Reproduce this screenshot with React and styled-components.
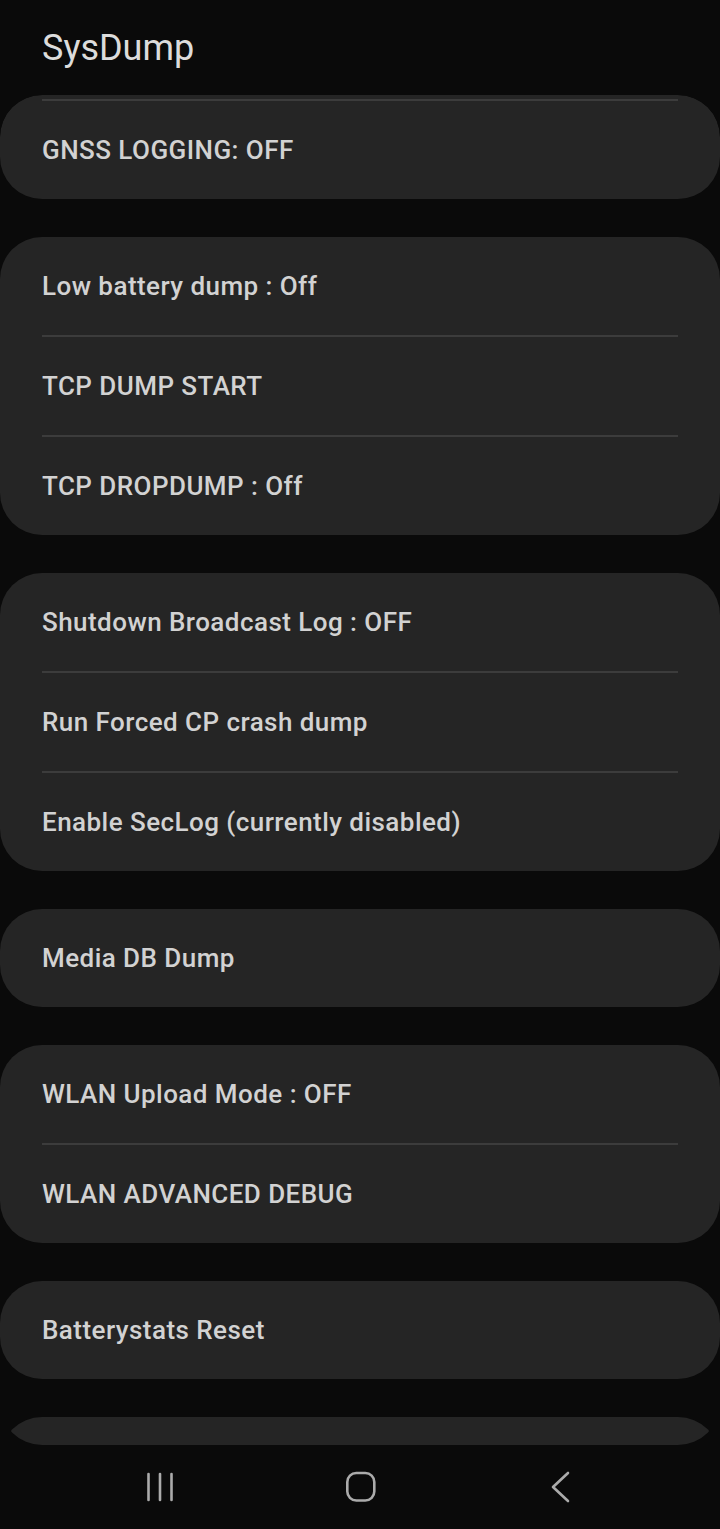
import React from "react";
import styled, { createGlobalStyle } from "styled-components";

const Global = createGlobalStyle`
  html, body { margin: 0; padding: 0; background: #0a0a0a; }
  body { font-family: Roboto, "Noto Sans", "Liberation Sans", sans-serif; }
  * { box-sizing: border-box; }
`;

const Screen = styled.div`
  width: 720px;
  height: 1529px;
  background: #0a0a0a;
  display: flex;
  flex-direction: column;
  overflow: hidden;
`;

const Header = styled.header`
  height: 95px;
  flex: none;
  padding: 0 0 0 42px;
  display: flex;
  align-items: flex-start;
`;

const Title = styled.h1`
  margin: 27px 0 0;
  font-size: 36px;
  line-height: 42px;
  font-weight: 400;
  color: #dcdcdc;
  letter-spacing: 0;
`;

const Viewport = styled.main`
  height: 1350px;
  flex: none;
  border-radius: 42px;
  overflow: hidden;
`;

const List = styled.div`
  display: flex;
  flex-direction: column;
  gap: 38px;
`;

const Card = styled.section`
  background: #252525;
  border-radius: 42px;
  padding-top: ${(p) => (p.$clipped ? "4px" : "0")};
  display: flex;
  flex-direction: column;
`;

const Divider = styled.div`
  height: 2px;
  margin: 0 42px;
  background: #3c3c3c;
`;

const Row = styled.div`
  height: 98px;
  padding: 0 42px;
  display: flex;
  align-items: center;
  font-size: 26px;
  font-weight: 500;
  letter-spacing: 0.45px;
  color: #d2d2d2;
  white-space: nowrap;
`;

const NavBar = styled.nav`
  height: 84px;
  flex: none;
  display: flex;
  align-items: center;
  justify-content: center;
  gap: 140px;
  padding: 0 0 0 2px;
`;

const NavButton = styled.div`
  width: 60px;
  height: 40px;
  display: flex;
  align-items: center;
  justify-content: center;
`;

const groups = [
  { clipped: true, items: ["GNSS LOGGING: OFF"] },
  { items: ["Low battery dump : Off", "TCP DUMP START", "TCP DROPDUMP : Off"] },
  {
    items: [
      "Shutdown Broadcast Log : OFF",
      "Run Forced CP crash dump",
      "Enable SecLog (currently disabled)",
    ],
  },
  { items: ["Media DB Dump"] },
  { items: ["WLAN Upload Mode : OFF", "WLAN ADVANCED DEBUG"] },
  { items: ["Batterystats Reset"] },
  { items: [""] },
];

const RecentsIcon = () => (
  <svg width="30" height="30" viewBox="0 0 30 30" fill="none">
    <g stroke="#ababab" strokeWidth="2.6" strokeLinecap="round">
      <line x1="2.5" y1="2" x2="2.5" y2="28" />
      <line x1="14" y1="2" x2="14" y2="28" />
      <line x1="25.5" y1="2" x2="25.5" y2="28" />
    </g>
  </svg>
);

const HomeIcon = () => (
  <svg width="32" height="32" viewBox="0 0 32 32" fill="none">
    <rect x="2.3" y="2" width="27" height="27.5" rx="9" stroke="#ababab" strokeWidth="2.6" />
  </svg>
);

const BackIcon = () => (
  <svg width="24" height="32" viewBox="0 0 24 32" fill="none">
    <path d="M19 2 L4 16 L19 30" stroke="#ababab" strokeWidth="2.6" strokeLinecap="round" strokeLinejoin="round" />
  </svg>
);

export default function App() {
  return (
    <>
      <Global />
      <Screen>
        <Header>
          <Title>SysDump</Title>
        </Header>
        <Viewport>
          <List>
            {groups.map((g, gi) => (
              <Card key={gi} $clipped={g.clipped}>
                {g.clipped && <Divider />}
                {g.items.map((t, i) => (
                  <React.Fragment key={i}>
                    {i > 0 && <Divider />}
                    <Row>{t}</Row>
                  </React.Fragment>
                ))}
              </Card>
            ))}
          </List>
        </Viewport>
        <NavBar>
          <NavButton>
            <RecentsIcon />
          </NavButton>
          <NavButton>
            <HomeIcon />
          </NavButton>
          <NavButton>
            <BackIcon />
          </NavButton>
        </NavBar>
      </Screen>
    </>
  );
}
